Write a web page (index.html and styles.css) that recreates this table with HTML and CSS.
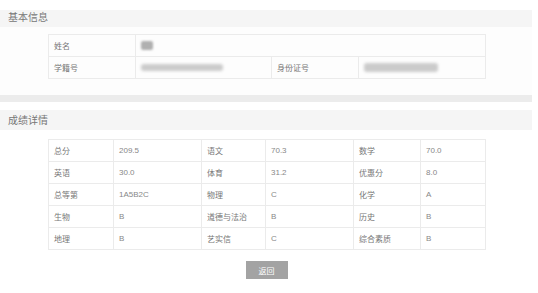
FILE: index.html
```html
<!DOCTYPE html>
<html lang="zh">
<head>
<meta charset="utf-8">
<link rel="stylesheet" href="styles.css">
</head>
<body>
<div class="page">
  <div class="top-gap"></div>
  <div class="section-title first">基本信息</div>
  <div class="section-body info">
    <table class="grid info-table">
      <colgroup><col class="c87"><col class="c136"><col class="c87"><col class="c127"></colgroup>
      <tr><td class="lbl">姓名</td><td colspan="3"><span class="blur blur-name"></span></td></tr>
      <tr><td class="lbl">学籍号</td><td><span class="blur blur-long"></span></td><td class="lbl">身份证号</td><td><span class="blur blur-id"></span></td></tr>
    </table>
  </div>
  <div class="divider"></div>
  <div class="section-title second">成绩详情</div>
  <div class="section-body scores">
    <table class="grid score-table">
      <colgroup><col class="c65"><col class="c88"><col class="c64"><col class="c88"><col class="c67"><col class="c65"></colgroup>
      <tr><td class="lbl">总分</td><td>209.5</td><td class="lbl">语文</td><td>70.3</td><td class="lbl">数学</td><td>70.0</td></tr>
      <tr><td class="lbl">英语</td><td>30.0</td><td class="lbl">体育</td><td>31.2</td><td class="lbl">优惠分</td><td>8.0</td></tr>
      <tr><td class="lbl">总等第</td><td>1A5B2C</td><td class="lbl">物理</td><td>C</td><td class="lbl">化学</td><td>A</td></tr>
      <tr><td class="lbl">生物</td><td>B</td><td class="lbl">道德与法治</td><td>B</td><td class="lbl">历史</td><td>B</td></tr>
      <tr><td class="lbl">地理</td><td>B</td><td class="lbl">艺实信</td><td>C</td><td class="lbl">综合素质</td><td>B</td></tr>
    </table>
    <div class="actions"><button class="btn-back">返回</button></div>
  </div>
</div>
</body>
</html>
```
FILE: styles.css
```css
html, body { margin: 0; padding: 0; background: #ffffff; }
body {
  font-family: "Liberation Sans", "Noto Sans CJK SC", sans-serif;
  color: #666;
}
.page { width: 532px; }
.top-gap { height: 10px; }
.section-title {
  background: #f5f5f5;
  padding-left: 8px;
  font-size: 10px;
  color: #777;
}
.section-title.first { height: 17px; line-height: 16px; }
.section-title.second { height: 20px; line-height: 21px; }
.section-body { padding-left: 48px; }
.section-body.info { padding-top: 7px; height: 61px; background: #fdfdfd; }
.divider { height: 7px; background: #ececec; margin-bottom: 8px; }
.section-body.scores { padding-top: 9px; }
.grid {
  border-collapse: collapse;
  table-layout: fixed;
  width: 437px;
  font-size: 8px;
}
.grid td {
  border: 1px solid #ebebeb;
  padding: 0 0 0 5px;
  color: #888;
  white-space: nowrap;
  overflow: hidden;
}
.grid td.lbl { color: #777; padding-left: 5px; }
.info-table td { height: 21px; }
.score-table td { height: 21px; }
.c87 { width: 87px; } .c136 { width: 136px; } .c127 { width: 127px; }
.c65 { width: 65px; } .c88 { width: 88px; } .c64 { width: 64px; } .c67 { width: 67px; }
.blur {
  display: inline-block;
  vertical-align: middle;
  background: #c4c4c4;
  filter: blur(1.5px);
  border-radius: 3px;
}
.blur-name { width: 12px; height: 9px; background: #b0b0b0; border-radius: 2px; filter: blur(1px); }
.blur-long { width: 82px; height: 7px; background: #cbcbcb; }
.blur-id { width: 74px; height: 9px; background: #cbcbcb; }
.actions { width: 437px; display: flex; justify-content: center; padding-top: 11px; }
.btn-back {
  width: 42px; height: 18px;
  border: none;
  background: #a3a3a3;
  color: #fff;
  font-family: "Liberation Sans", "Noto Sans CJK SC", sans-serif;
  font-size: 8px;
  padding: 0;
}
```
